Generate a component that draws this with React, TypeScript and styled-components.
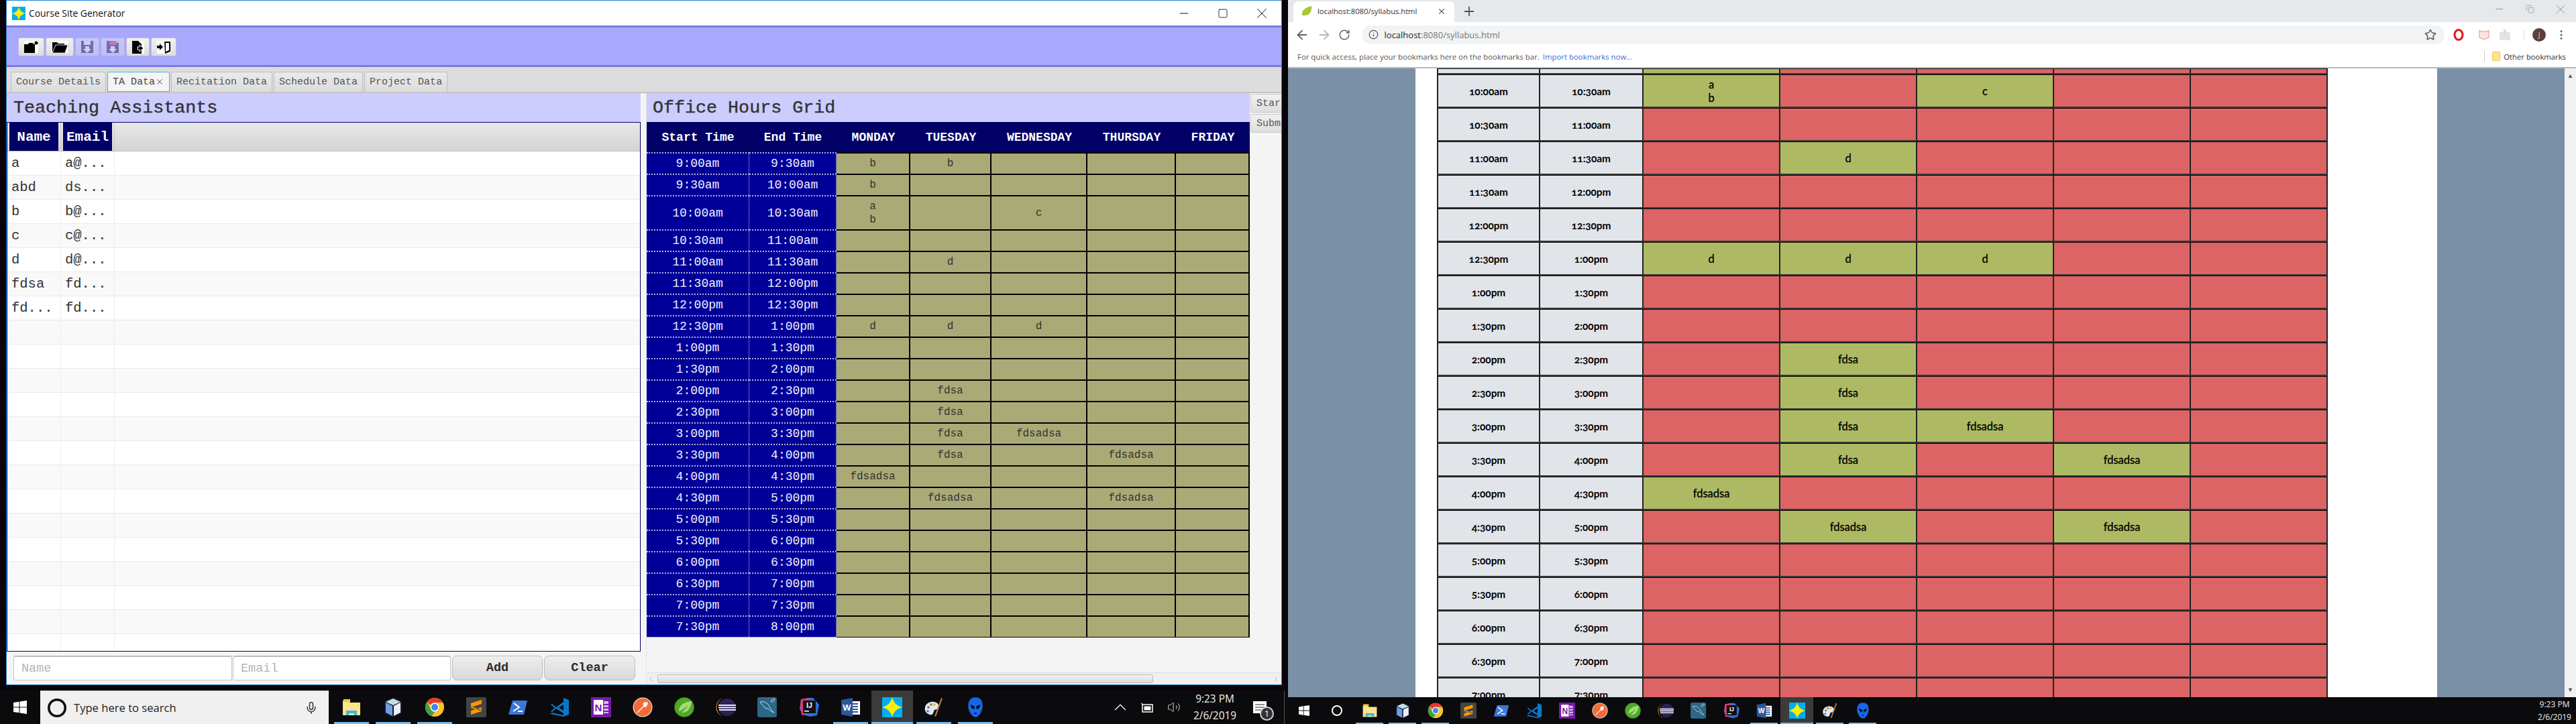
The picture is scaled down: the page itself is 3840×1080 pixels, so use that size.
import React from "react";
import styled, { createGlobalStyle } from "styled-components";
import { ArrowLeft, ArrowRight, RotateCw, Info, Star, X, Plus, Minus, Square, Copy, ChevronUp, ChevronLeft, ChevronRight, Mic, Volume2, MoreVertical } from "lucide-react";

const Global = createGlobalStyle`
  html, body { margin: 0; padding: 0; background: #0a0508; }
  #root { width: 3840px; height: 1080px; overflow: hidden; }
  * { box-sizing: border-box; }
`;

const MONO = `"Liberation Mono", monospace`;
const UI = `"Open Sans", "Noto Sans", sans-serif`;

/* ---------- page ---------- */
const Screens = styled.div`display: flex; width: 3840px; height: 1080px;`;
const Monitor = styled.div`width: 1920px; height: 1080px; display: flex; flex-direction: column; overflow: hidden;`;
const Desktop = styled.div<{ $h: number }>`
  height: ${p => p.$h}px; flex: none; background: #0a0408; overflow: hidden;
`;
const LeftDesk = styled(Desktop)`padding: 0 9px;`;

/* ---------- app window ---------- */
const AppWindow = styled.div`
  width: 1902px; height: 1022px; background: #f4f4f4; border: 1px solid #1b83d4;
  display: flex; flex-direction: column;
`;
const TitleBar = styled.div`
  height: 37px; flex: none; background: #fff; display: flex; align-items: center; padding: 0 0 0 8px;
  font: 13.9px ${UI}; color: #111;
`;
const TitleText = styled.span`margin-left: 5px; flex: 1;`;
const WinCtl = styled.span`width: 58px; display: flex; justify-content: center; align-items: center; color: #111;`;
const Toolbar = styled.div`
  height: 62px; flex: none; background: #a8a8ff; border-top: 3px solid #7b7bdf; border-bottom: 3px solid #7b7bdf;
  padding: 15px 0 0 17px; display: flex; gap: 2px;
`;
const ToolBtn = styled.div<{ $w: number; $off?: boolean }>`
  width: ${p => p.$w}px; height: 28px; border: 1px solid #bdbdd0; border-radius: 3px;
  background: linear-gradient(#f2f2f2, #dcdcdc); display: flex; align-items: center; justify-content: center;
  ${p => p.$off && "opacity: .42;"}
`;
const TabBar = styled.div`
  height: 39px; flex: none; background: #dcdcdc; border-bottom: 2px solid #c4c4c4;
  padding: 7px 0 0 6px; display: flex; gap: 2px; align-items: stretch;
`;
const Tab = styled.div<{ $on?: boolean }>`
  padding: 0 7px; display: flex; align-items: center; font: 15px ${MONO}; white-space: pre;
  color: ${p => (p.$on ? "#444" : "#555")};
  border: 1px solid ${p => (p.$on ? "#47b4dc" : "#bdbdbd")}; border-bottom-width: ${p => (p.$on ? "1px" : "0")};
  border-radius: 3px 3px 0 0;
  background: ${p => (p.$on ? "#f4f4f4" : "linear-gradient(#eaeaea, #dcdcdc)")};
`;
const Workspace = styled.div`flex: 1; display: flex; min-height: 0;`;
const LeftPane = styled.div`width: 947px; flex: none; display: flex; flex-direction: column; padding-right: 2px;`;
const Splitter = styled.div`width: 7px; flex: none; background: #f4f4f4; border-right: 1px solid #e4e4e4;`;
const RightPane = styled.div`flex: 1; display: flex; flex-direction: column; min-width: 0; background: #f4f4f4;`;
const Heading = styled.div`
  height: 43px; flex: none; background: #ccccff; display: flex; align-items: center; padding-left: 10px;
  font: normal 26.7px ${MONO}; -webkit-text-stroke: .4px #333; color: #333; white-space: pre;
`;

/* ---------- TA table ---------- */
const TaTable = styled.div`
  flex: 1; min-height: 0; border: 1px solid #000066; overflow: hidden; background: #fff;
  display: flex; flex-direction: column;
`;
const TaHeadRow = styled.div`
  height: 43px; flex: none; display: flex; background: linear-gradient(#e8e8e8, #d4d4d4); border-bottom: 1px solid #c0c0c0;
`;
const TaHeadSlot = styled.div<{ $w: number }>`
  width: ${p => p.$w}px; padding: 0 3px; border-right: 1px solid #c8c8c8; display: flex;
`;
const TaHead = styled.div`
  flex: 1; background: #000066; color: #fff; font: bold 21px ${MONO}; display: flex; align-items: center; justify-content: center;
`;
const TaRow = styled.div<{ $alt: boolean }>`
  height: 36px; flex: none; display: flex; background: ${p => (p.$alt ? "#f9f9f9" : "#fff")}; border-bottom: 1px solid #eaeaea;
`;
const TaCell = styled.div<{ $w: number }>`
  width: ${p => p.$w}px; padding-left: 6px; display: flex; align-items: center; border-right: 1px solid #eeeeee;
  font: 20.5px ${MONO}; color: #333; white-space: pre;
`;
const FormBar = styled.div`height: 49px; flex: none; padding: 6px 0 0 10px; display: flex; gap: 1px;`;
const Field = styled.input<{ $w: number }>`
  width: ${p => p.$w}px; height: 37px; border: 1px solid #c6c6c6; border-top: 2px solid #bcbcbc; border-radius: 3px; background: #fff;
  padding: 0 11px; font: 18.5px ${MONO}; outline: none;
  &::placeholder { color: #b4b4b4; opacity: 1; }
`;
const FormBtn = styled.div<{ $w: number }>`
  width: ${p => p.$w}px; height: 37px; border: 1px solid #bdbdbd; border-radius: 7px; margin-left: 1px;
  background: linear-gradient(#eeeeee, #d8d8d8); display: flex; align-items: center; justify-content: center;
  font: bold 18.5px ${MONO}; color: #2a2a2a;
`;

/* ---------- office hours grid ---------- */
const GridScroller = styled.div`flex: 1; min-height: 0; display: flex; overflow: hidden;`;
const GridSection = styled.div`width: 899px; flex: none; display: flex; flex-direction: column;`;
const GridHeading = styled(Heading)`padding-left: 9px;`;
const SideCol = styled.div`width: 47px; flex: none; padding: 1px 0 0 1px; display: flex; flex-direction: column; gap: 2px;`;
const SideBtn = styled.div`
  height: 28px; border: 1px solid #c8c8c8; border-right: none; border-radius: 3px 0 0 3px; background: linear-gradient(#f0f0f0, #dedede);
  padding-left: 8px; display: flex; align-items: center; font: 15px ${MONO}; color: #555; overflow: hidden;
`;
const GridRow = styled.div<{ $h: number }>`display: flex; height: ${p => p.$h}px; flex: none;`;
const GridHead = styled.div<{ $w: number }>`
  width: ${p => p.$w}px; background: #000066; color: #fff; font: bold 18px ${MONO}; white-space: pre;
  display: flex; align-items: center; justify-content: center;
`;
const TimeCell = styled.div<{ $w: number }>`
  width: ${p => p.$w}px; background: #000099; color: #f0f0ff; font: 18px ${MONO};
  border-top: 2px dotted #b4b4dc; border-right: 1px dotted #c8c8e8;
  display: flex; align-items: center; justify-content: center;
`;
const HourCell = styled.div<{ $w: number }>`
  width: ${p => p.$w}px; background: #aaaa77; color: #333; font: 16px/20px ${MONO}; white-space: pre-line; text-align: center;
  border-top: 2px solid #000; border-right: 2px solid #000;
  display: flex; align-items: center; justify-content: center;
`;
const GridEnd = styled.div`height: 1px; width: 899px; flex: none; display: flex;`;
const EndTime = styled.div`width: 283px; background: #b4b4dc;`;
const EndHour = styled.div`flex: 1; background: #000;`;
const HScroll = styled.div`
  height: 18px; flex: none; background: #f0f0f0; border-top: 1px solid #dedede; display: flex; align-items: center; color: #777; padding-right: 2px;
`;
const ScrollArrow = styled.span`width: 12px; height: 16px; display: flex; align-items: center; justify-content: center; overflow: visible;`;
const HThumb = styled.div`
  width: 739px; height: 13px; margin-left: 4px; margin-right: auto; border: 1px solid #bbb; border-radius: 3px; background: linear-gradient(#f0f0f0, #dcdcdc);
`;

/* ---------- taskbar ---------- */
const TaskBar = styled.div<{ $h: number }>`
  height: ${p => p.$h}px; flex: none; background: #0b0a0c; display: flex; align-items: stretch; color: #fff; font-family: ${UI};
`;
const Start = styled.div<{ $w: number }>`width: ${p => p.$w}px; flex: none; display: flex; align-items: center; justify-content: center;`;
const SearchBox = styled.div`
  width: 430px; flex: none; background: #f0f0f0; border-top: 1px solid #c8c8c8; display: flex; align-items: center; padding: 0 16px 0 11px; color: #222;
  font: 16.6px ${UI};
`;
const SearchText = styled.span`margin-left: 11px; flex: 1;`;
const Apps = styled.div<{ $ml: number }>`display: flex; margin-left: ${p => p.$ml}px;`;
const Slot = styled.div<{ $w: number; $state?: "run" | "active"; $bar: number; $pad: number }>`
  width: ${p => p.$w}px; display: flex; align-items: center; justify-content: center; position: relative;
  background: ${p => (p.$state === "active" ? "#3b3b3b" : "transparent")};
  &::after {
    content: ""; display: ${p => (p.$state ? "block" : "none")}; position: absolute; bottom: 0; height: ${p => p.$bar}px; background: #76b9ed;
    left: ${p => (p.$state === "active" ? 0 : p.$pad)}px; right: ${p => (p.$state === "active" ? 0 : p.$pad)}px;
  }
`;
const Tray = styled.div`margin-left: auto; display: flex; align-items: stretch;`;
const TrayItem = styled.div<{ $w: number }>`width: ${p => p.$w}px; display: flex; align-items: center; justify-content: center; position: relative;`;
const Clock = styled.div<{ $w: number; $size: number; $gap: number }>`
  width: ${p => p.$w}px; display: flex; flex-direction: column; align-items: center; justify-content: center; gap: ${p => p.$gap}px;
  font: ${p => p.$size}px/1 ${UI}; color: #eee;
`;
const Badge = styled.span`
  position: absolute; left: 26px; top: 24px; width: 21px; height: 21px; border-radius: 50%; background: #333; border: 2px solid #ccc;
  font: 13px/17px ${UI}; color: #fff; text-align: center;
`;
const EdgeLine = styled.div`width: 1px; background: #555; margin-right: 5px; margin-left: 10px;`;

/* ---------- browser ---------- */
const Browser = styled.div`height: 1040px; display: flex; flex-direction: column; background: #fff;`;
const TabStrip = styled.div`height: 33px; flex: none; background: #e6e9ec; display: flex; align-items: flex-end; padding-left: 8px;`;
const ChromeTab = styled.div`
  width: 240px; height: 31px; background: #fff; border-radius: 8px 8px 0 0; display: flex; align-items: center; padding: 0 12px 2px 12px;
  font: 11.2px ${UI}; color: #333;
`;
const TabTitle = styled.span`margin-left: 8px; flex: 1;`;
const NewTab = styled.div`margin-left: 11px; height: 33px; display: flex; align-items: center; color: #555;`;
const WinBtns = styled.div`margin-left: auto; height: 33px; display: flex; align-items: center; color: #888; padding-bottom: 6px;`;
const ChromeWin = styled.span`width: 46px; display: flex; justify-content: center;`;
const NavBar = styled.div`height: 37px; flex: none; display: flex; align-items: center; padding: 0 0 0 10px; color: #5f6368;`;
const NavIcon = styled.span<{ $w: number; $dim?: boolean }>`
  width: ${p => p.$w}px; display: flex; align-items: center; color: ${p => (p.$dim ? "#b5b8bb" : "#5f6368")};
`;
const Omnibox = styled.div`
  width: 1622px; height: 28px; margin-left: 2px; border-radius: 14px; background: #f1f3f4; display: flex; align-items: center; padding: 0 12px 0 10px;
  font: 13px ${UI}; color: #555;
`;
const Url = styled.span`margin-left: 9px; flex: 1; color: #777;`;
const UrlHost = styled.span`color: #222;`;
const ExtSlot = styled.span<{ $w: number }>`width: ${p => p.$w}px; display: flex; justify-content: center; align-items: center;`;
const NavSep = styled.span`width: 1px; height: 16px; background: #d8d8d8;`;
const Avatar = styled.span`
  width: 20px; height: 20px; border-radius: 50%; background: #5d4037; color: #ddd; font: 10px/20px ${UI}; text-align: center;
`;
const BookmarkBar = styled.div`
  height: 32px; flex: none; background: #fff; border-bottom: 2px solid #b8b8b8; display: flex; align-items: center; padding: 0 15px 2px 14px;
  font: 11.4px ${UI}; color: #555; white-space: pre;
`;
const LinkText = styled.span`color: #3b6fd6; margin-left: 5px;`;
const OtherBm = styled.div`margin-left: auto; display: flex; align-items: center; color: #333; font-size: 11.3px;`;
const BmSep = styled.span`width: 1px; height: 16px; background: #ccc; margin-right: 11px;`;
const BmFolder = styled.svg`margin-right: 5px;`;
const Page = styled.div`flex: 1; min-height: 0; display: flex; overflow: hidden;`;
const Side = styled.div<{ $w: number }>`width: ${p => p.$w}px; flex: none; background: #7a90a6;`;
const PageBody = styled.div`width: 1523px; flex: none; background: #fff; padding-left: 32px; overflow: hidden;`;
const VScroll = styled.div`
  width: 17px; flex: none; background: #f1f1f1; display: flex; flex-direction: column; justify-content: space-between; align-items: center; padding: 6px 0;
  color: #505050; font: 9px/10px ${UI};
`;
const SchedRow = styled.div<{ $h: number }>`display: flex; height: ${p => p.$h}px; width: 1329px;`;
const SchedCell = styled.div<{ $w: number; $kind: "time" | "free" | "busy" }>`
  width: ${p => p.$w}px; flex: none; display: flex; align-items: center; justify-content: center; white-space: pre-line; text-align: center;
  border-bottom: 2px solid #3a3a3a; border-top: 1px solid #000; border-right: 2px solid #222;
  font: ${p => (p.$kind === "time" ? "bold 15.4px" : "normal 16.5px")}/20px Lato, sans-serif; color: #000;
  font-variant-numeric: oldstyle-nums;
  ${p => p.$kind !== "time" && "-webkit-text-stroke: .3px #000;"}
  background: ${p => (p.$kind === "time" ? "#e1e4e9" : p.$kind === "busy" ? "#aeba63" : "#dc6464")};
  &:first-child { border-left: 2px solid #222; }
`;

/* ---------- drawings ---------- */
const StarLogo = ({ s = 20 }: { s?: number }) => (
  <svg width={s} height={s} viewBox="0 0 20 20"><rect width="20" height="20" fill="#00aeef" /><path d="M10 0 Q11.5 8 20 10 Q11.5 12 10 20 Q8.5 12 0 10 Q8.5 8 10 0Z" fill="#ffee00" /></svg>
);
const TbNew = () => (<svg width="21" height="18" viewBox="0 0 21 18"><rect width="21" height="18" fill="#fff" /><path d="M0 5h6l1 -2h6l1 2h2v13H0z" fill="#000" /><circle cx="18" cy="3" r="2.6" fill="#000" /></svg>);
const TbOpen = () => (<svg width="24" height="18" viewBox="0 0 24 18"><rect width="24" height="18" fill="#fff" /><path d="M1 18V2h7l2 2h9v3H6z" fill="#000" /><path d="M6 6h18l-4 12H1z" fill="#000" stroke="#fff" strokeWidth=".8" /></svg>);
const TbSave = ({ pink }: { pink?: boolean }) => (<svg width="18" height="18" viewBox="0 0 18 18"><path d="M0 0h18v18H0z" fill="#223" /><rect x="4" y="0" width="10" height="6" fill={pink ? "#e0306a" : "#fff"} />{pink && <rect x="14" y="0" width="4" height="3" fill="#ffd040" />}<path d="M6 8h6v4h3l-6 6-6-6h3z" fill="#fff" /></svg>);
const TbExport = () => (<svg width="18" height="19" viewBox="0 0 18 19"><rect width="18" height="19" fill="#fff" /><path d="M0 0h9l5 5v14H0z" fill="#000" /><path d="M8 9h3V6l6 5-6 5v-3H8z" fill="#000" stroke="#fff" strokeWidth="1" /></svg>);
const TbExit = () => (<svg width="20" height="19" viewBox="0 0 20 19"><rect width="20" height="19" fill="#fff" /><path d="M11 1h9v15l-8 3z" fill="#000" /><path d="M13 3h5v11l-5 2z" fill="#fff" /><path d="M0 7h4V4l5 5-5 5v-3H0z" fill="#000" /></svg>);

const WinLogo = ({ s }: { s: number }) => (<svg width={s} height={s} viewBox="0 0 20 20"><path d="M0 3l8.5-1.3v7.8H0zM9.5 1.500L20 0v9.500H9.500zM0 10.500h8.500v7.800L0 17zM9.500 10.500H20V20L9.500 18.500z" fill="#fff" /></svg>);
const Cortana = ({ s, w, light }: { s: number; w: number; light?: boolean }) => (<svg width={s} height={s} viewBox="0 0 24 24"><circle cx="12" cy="12" r="10.500" fill="none" stroke={light ? "#fff" : "#111"} strokeWidth={w} /></svg>);
const icons: Record<string, (s: number) => React.ReactNode> = {
  folder: s => (<svg width={s} height={s} viewBox="0 0 30 30"><path d="M2 5h9l2 3h15v19H2z" fill="#fde38a" /><rect x="3" y="3" width="10" height="4" fill="#f6c445" /><path d="M7 27V20h16v7h-4v-3h-8v3z" fill="#3fb3e8" /></svg>),
  cube: s => (<svg width={s} height={s} viewBox="0 0 30 30"><path d="M15 0l13 6v18l-13 6-13-6V6z" fill="#15153f" /><path d="M15 2l11 5-11 5L4 7z" fill="#bfe2d8" /><path d="M4 8l10 5v15L4 23z" fill="#6f9fe0" /><path d="M26 8l-10 5v15l10-5z" fill="#e8f0f2" /></svg>),
  chrome: s => (<svg width={s} height={s} viewBox="0 0 30 30"><circle cx="15" cy="15" r="14" fill="#fbc02d" /><path d="M15 1A14 14 0 0 1 27.100 8H15a7 7 0 0 0-6.100 3.500L3.500 7A14 14 0 0 1 15 1z" fill="#e53935" /><path d="M3.500 7l6.100 11.500A7 7 0 0 0 15 22l-4.500 6.300A14 14 0 0 1 3.500 7z" fill="#43a047" /><circle cx="15" cy="15" r="6.500" fill="#fff" /><circle cx="15" cy="15" r="5" fill="#4285f4" /></svg>),
  sublime: s => (<svg width={s} height={s} viewBox="0 0 30 30"><rect width="30" height="30" rx="2" fill="#444" /><path d="M7 9l16-5v6L7 15zM7 16l16 4v-1L7 14zM7 20l16-5v6L7 26z" fill="#ff9800" /></svg>),
  ps: s => (<svg width={s} height={s} viewBox="0 0 30 30"><path d="M7 5h22l-5 21H1z" fill="#3b78d8" /><path d="M9 9l8 6-9 6M15 21h7" fill="none" stroke="#fff" strokeWidth="2" /></svg>),
  vs: s => (<svg width={s} height={s} viewBox="0 0 30 30"><path d="M21 1l8 3v22l-8 3L1 25l3-2 17 4V3z" fill="#0a78c8" /><path d="M21 7L10 15 4 10 2 11l6 5-6 5 2 1 6-5 11 7z M21 11v9l-7-4.500z" fill="#0a78c8" fillRule="evenodd" /></svg>),
  onenote: s => (<svg width={s} height={s} viewBox="0 0 30 30"><rect width="30" height="30" fill="#7719aa" /><rect x="4" y="4" width="14" height="22" fill="#fff" /><path d="M19 6h7v4h-7zM19 12h7v3h-7zM19 17h7v3h-7zM19 22h7v2h-7z" fill="#d7b8ea" /><text x="11" y="21" textAnchor="middle" fontFamily="Liberation Sans" fontWeight="bold" fontSize="15" fill="#7719aa">N</text></svg>),
  postman: s => (<svg width={s} height={s} viewBox="0 0 30 30"><circle cx="15" cy="15" r="14.500" fill="#f7f0ea" /><circle cx="15" cy="15" r="13.500" fill="#f26b3a" /><path d="M7 23L17 13" stroke="#fff" strokeWidth="1.500" /><path d="M16 8l5-1 2 2-3 6-4-1z" fill="#fff" /></svg>),
  spring: s => (<svg width={s} height={s} viewBox="0 0 30 30"><circle cx="15" cy="15" r="14.500" fill="#4fa82a" strokeDasharray="3 2" stroke="#2f7d18" strokeWidth="1" /><path d="M7 21C7 11 16 7 26 6 25 17 19 24 11 23 16 19 18 16 21 12 16 16 12 19 7 21z" fill="#a5db78" /></svg>),
  eclipse: s => (<svg width={s} height={s} viewBox="0 0 30 30"><path d="M11 1A14.500 14.500 0 0 0 11 29 15 15 0 0 1 11 1z" fill="#f7941e" /><circle cx="17" cy="15" r="13" fill="#2c2255" /><path d="M4 11h26v2H4zM4 14.500h26v2H4zM5 18h25v2H5z" fill="#e8e8f4" /></svg>),
  mysql: s => (<svg width={s} height={s} viewBox="0 0 30 30"><rect width="29" height="30" rx="3" fill="#2b6787" /><path d="M4 7c6-1 11 1 14 7 2 4 4 7 7 9-4-1-7-4-9-6-3 0-6-1-7-4-2-2-4-4-5-6zM20 5l5-3 1 2-4 4z" fill="none" stroke="#c9dde6" strokeWidth="1" /></svg>),
  ij: s => (<svg width={s} height={s} viewBox="0 0 30 30"><path d="M3 3l12-2 6 0 9 10-3 16-10 2-12-3-4-9z" fill="#2f6fdf" /><path d="M2 14L3 3l12-2-4 24-7 2z" fill="#e9366e" /><rect x="6" y="5" width="19" height="19" fill="#111" /><text x="15.500" y="16" textAnchor="middle" fontFamily="Liberation Sans" fontWeight="bold" fontSize="10.500" fill="#fff">IJ</text><rect x="8" y="20" width="7" height="1.500" fill="#fff" /></svg>),
  word: s => (<svg width={s} height={s} viewBox="0 0 30 30"><rect x="11" y="6" width="18" height="20" fill="#fff" /><path d="M14 9h12v2H14zM14 13h12v2H14zM14 17h12v2H14zM14 21h12v2H14z" fill="#2b579a" /><path d="M1 4l17-3v28L1 26z" fill="#2b579a" /><text x="9.500" y="20" textAnchor="middle" fontFamily="Liberation Sans" fontWeight="bold" fontSize="13" fill="#fff">W</text></svg>),
  star: s => <StarLogo s={s} />,
  palette: s => (<svg width={s} height={s} viewBox="0 0 30 30"><path d="M2 20C0 11 8 6 15 7c7 1 9 6 6 10-3 3-5 0-6 4s-2 6-6 5-6-3-7-6z" fill="#dbe9f0" /><circle cx="7" cy="15" r="1.800" fill="#e53935" /><circle cx="11" cy="11" r="1.800" fill="#43a047" /><circle cx="16" cy="11" r="1.800" fill="#f9a825" /><circle cx="6" cy="21" r="1.800" fill="#1e88e5" /><path d="M26 1l2 1-10 27-2-1z" fill="#b57b3a" /></svg>),
  alien: s => (<svg width={s} height={s} viewBox="0 0 30 30"><path d="M15 0c7 0 11 5 11 13 0 8-6 17-11 17S4 21 4 13C4 5 8 0 15 0z" fill="#1668e8" stroke="#223" strokeWidth="1" /><path d="M8 11l6 3-1 4-4-2zM22 11l-6 3 1 4 4-2z" fill="#000" /><path d="M13 24h4" stroke="#012" strokeWidth="1.500" /></svg>),
};
const appOrder: [string, "run" | "active" | undefined][] = [
  ["folder", "run"], ["cube", "run"], ["chrome", "run"], ["sublime", undefined], ["ps", undefined], ["vs", undefined],
  ["onenote", undefined], ["postman", undefined], ["spring", undefined], ["eclipse", undefined], ["mysql", undefined], ["ij", undefined],
  ["word", "run"], ["star", "active"], ["palette", "run"], ["alien", "run"],
];
const AppStrip = ({ w, s, bar, pad, ml }: { w: number; s: number; bar: number; pad: number; ml: number }) => (
  <Apps $ml={ml}>
    {appOrder.map(([k, st]) => (
      <Slot key={k} $w={w} $state={st} $bar={bar} $pad={pad}>{icons[k](s)}</Slot>
    ))}
  </Apps>
);

/* ---------- data ---------- */
const hours = ["9:00am","9:30am","10:00am","10:30am","11:00am","11:30am","12:00pm","12:30pm","1:00pm","1:30pm","2:00pm","2:30pm","3:00pm","3:30pm","4:00pm","4:30pm","5:00pm","5:30pm","6:00pm","6:30pm","7:00pm","7:30pm","8:00pm"];
const slots: Record<string, string[]> = {
  "9:00am": ["b","b","","",""], "9:30am": ["b","","","",""], "10:00am": ["a\nb","","c","",""],
  "11:00am": ["","d","","",""], "12:30pm": ["d","d","d","",""], "2:00pm": ["","fdsa","","",""], "2:30pm": ["","fdsa","","",""],
  "3:00pm": ["","fdsa","fdsadsa","",""], "3:30pm": ["","fdsa","","fdsadsa",""], "4:00pm": ["fdsadsa","","","",""], "4:30pm": ["","fdsadsa","","fdsadsa",""],
};
const EMPTY = ["","","","",""];
const gridCols = [153,130,110,121,143,132,110];
const gridHeads = ["Start Time","End Time","MONDAY","TUESDAY","WEDNESDAY","THURSDAY","FRIDAY"];
const tas = [["a","a@..."],["abd","ds..."],["b","b@..."],["c","c@..."],["d","d@..."],["fdsa","fd..."],["fd...","fd..."]];
const taRows = Array.from({ length: 21 }, (_, i) => tas[i] || ["",""]);
const schedCols = [154,154,204,204,204,204,204];
const schedHours = hours.slice(2, 21);

const App = () => (
  <>
    <Global />
    <Screens>
      <Monitor>
        <LeftDesk $h={1030}>
          <AppWindow>
            <TitleBar>
              <StarLogo />
              <TitleText>Course Site Generator</TitleText>
              <WinCtl><Minus size={20} strokeWidth={1.2} /></WinCtl>
              <WinCtl><Square size={16} strokeWidth={1.3} /></WinCtl>
              <WinCtl><X size={26} strokeWidth={.9} /></WinCtl>
            </TitleBar>
            <Toolbar>
              <ToolBtn $w={39}><TbNew /></ToolBtn>
              <ToolBtn $w={42}><TbOpen /></ToolBtn>
              <ToolBtn $w={36} $off><TbSave /></ToolBtn>
              <ToolBtn $w={36} $off><TbSave pink /></ToolBtn>
              <ToolBtn $w={35}><TbExport /></ToolBtn>
              <ToolBtn $w={38}><TbExit /></ToolBtn>
            </Toolbar>
            <TabBar>
              <Tab>Course Details</Tab>
              <Tab $on>TA Data<X size={14} strokeWidth={1.5} /></Tab>
              <Tab>Recitation Data</Tab>
              <Tab>Schedule Data</Tab>
              <Tab>Project Data</Tab>
            </TabBar>
            <Workspace>
              <LeftPane>
                <Heading>Teaching Assistants</Heading>
                <TaTable>
                  <TaHeadRow>
                    <TaHeadSlot $w={80}><TaHead>Name</TaHead></TaHeadSlot>
                    <TaHeadSlot $w={80}><TaHead>Email</TaHead></TaHeadSlot>
                  </TaHeadRow>
                  {taRows.map((r, i) => (
                    <TaRow key={i} $alt={i % 2 === 1}>
                      <TaCell $w={80}>{r[0]}</TaCell>
                      <TaCell $w={80}>{r[1]}</TaCell>
                    </TaRow>
                  ))}
                </TaTable>
                <FormBar>
                  <Field $w={326} placeholder="Name" readOnly />
                  <Field $w={325} placeholder="Email" readOnly />
                  <FormBtn $w={135}>Add</FormBtn>
                  <FormBtn $w={136}>Clear</FormBtn>
                </FormBar>
              </LeftPane>
              <Splitter />
              <RightPane>
                <GridScroller>
                  <GridSection>
                    <GridHeading>Office Hours Grid</GridHeading>
                    <GridRow $h={45}>
                      {gridHeads.map((h, i) => <GridHead key={h} $w={gridCols[i]}>{h}</GridHead>)}
                    </GridRow>
                    {hours.slice(0, 22).map((h, i) => {
                      const vals = slots[h] || EMPTY;
                      return (
                        <GridRow key={h} $h={h === "10:00am" ? 51 : 32}>
                          <TimeCell $w={gridCols[0]}>{h}</TimeCell>
                          <TimeCell $w={gridCols[1]}>{hours[i + 1]}</TimeCell>
                          {vals.map((v, j) => <HourCell key={j} $w={gridCols[j + 2]}>{v}</HourCell>)}
                        </GridRow>
                      );
                    })}
                    <GridEnd><EndTime /><EndHour /></GridEnd>
                  </GridSection>
                  <SideCol>
                    <SideBtn>Star</SideBtn>
                    <SideBtn>Subm</SideBtn>
                  </SideCol>
                </GridScroller>
                <HScroll>
                  <ScrollArrow><ChevronLeft size={20} strokeWidth={1.1} /></ScrollArrow>
                  <HThumb />
                  <ScrollArrow><ChevronRight size={20} strokeWidth={1.1} /></ScrollArrow>
                </HScroll>
              </RightPane>
            </Workspace>
          </AppWindow>
        </LeftDesk>
        <TaskBar $h={50}>
          <Start $w={60}><WinLogo s={20} /></Start>
          <SearchBox>
            <Cortana s={28} w={3} />
            <SearchText>Type here to search</SearchText>
            <Mic size={20} strokeWidth={1.6} />
          </SearchBox>
          <AppStrip w={62} s={30} bar={3} pad={5} ml={3} />
          <Tray>
            <TrayItem $w={40}><ChevronUp size={30} strokeWidth={1} /></TrayItem>
            <TrayItem $w={40}>
              <svg width="18" height="15" viewBox="0 0 18 15"><rect x="2" y="3" width="15" height="11" fill="none" stroke="#fff" strokeWidth="1.500" /><rect x="4.500" y="5.500" width="10" height="6" fill="#fff" /><path d="M0 0l3 2v3H1V3z" fill="#ddd" /></svg>
            </TrayItem>
            <TrayItem $w={40}><Volume2 size={20} strokeWidth={1} /></TrayItem>
            <Clock $w={82} $size={15.4} $gap={10}><span>9:23 PM</span><span>2/6/2019</span></Clock>
            <TrayItem $w={52}>
              <svg width="20" height="18" viewBox="0 0 20 18"><path d="M0 0h20v18H0z" fill="#fff" /><path d="M3 5h14M3 9h14M3 13h14" stroke="#222" /></svg>
              <Badge>1</Badge>
            </TrayItem>
            <EdgeLine />
          </Tray>
        </TaskBar>
      </Monitor>

      <Monitor>
        <Browser>
          <TabStrip>
            <ChromeTab>
              <svg width="16" height="15" viewBox="0 0 16 15"><path d="M1 14C-1 7 6 2 15 0c1 8-3 14-9 14-2 0-3 0-5 0z" fill="#a8c83a" /></svg>
              <TabTitle>localhost:8080/syllabus.html</TabTitle>
              <X size={14} strokeWidth={1.8} />
            </ChromeTab>
            <NewTab><Plus size={22} strokeWidth={2} /></NewTab>
            <WinBtns>
              <ChromeWin><Minus size={17} strokeWidth={1.2} /></ChromeWin>
              <ChromeWin><Copy size={13} strokeWidth={1.2} /></ChromeWin>
              <ChromeWin><X size={24} strokeWidth={.8} /></ChromeWin>
            </WinBtns>
          </TabStrip>
          <NavBar>
            <NavIcon $w={33}><ArrowLeft size={22} /></NavIcon>
            <NavIcon $w={32} $dim><ArrowRight size={22} /></NavIcon>
            <NavIcon $w={33}><RotateCw size={18} /></NavIcon>
            <Omnibox>
              <Info size={15} />
              <Url><UrlHost>localhost</UrlHost>:8080/syllabus.html</Url>
              <Star size={18} />
            </Omnibox>
            <ExtSlot $w={43}><svg width="16" height="18" viewBox="0 0 16 18"><ellipse cx="8" cy="9" rx="6" ry="7.500" fill="none" stroke="#e5121e" strokeWidth="3" /></svg></ExtSlot>
            <ExtSlot $w={32}><svg width="16" height="16" viewBox="0 0 16 16"><path d="M1 1l3 2h8l3-2v11l-7 3-7-3z" fill="#fbe6e4" stroke="#e88" /></svg></ExtSlot>
            <ExtSlot $w={32}><svg width="16" height="16" viewBox="0 0 16 16"><rect y="4" width="16" height="12" fill="#e4e4e4" /><rect x="6" y="0" width="4" height="8" fill="#ddd" /></svg></ExtSlot>
            <ExtSlot $w={25}><NavSep /></ExtSlot>
            <ExtSlot $w={20}><Avatar>J</Avatar></ExtSlot>
            <ExtSlot $w={45}><MoreVertical size={18} /></ExtSlot>
          </NavBar>
          <BookmarkBar>
            <span>For quick access, place your bookmarks here on the bookmarks bar.</span>
            <LinkText>Import bookmarks now...</LinkText>
            <OtherBm>
              <BmSep />
              <BmFolder width="12" height="14" viewBox="0 0 12 14"><rect x=".5" y=".5" width="11" height="13" rx="1" fill="#fde293" stroke="#f5c542" /></BmFolder>
              Other bookmarks
            </OtherBm>
          </BookmarkBar>
          <Page>
            <Side $w={190} />
            <PageBody>
              <SchedRow $h={9}>
                {schedCols.map((w, i) => <SchedCell key={i} $w={w} $kind={i < 2 ? "time" : i === 2 ? "busy" : "free"} />)}
              </SchedRow>
              {schedHours.map((h, i) => {
                const vals = slots[h] || EMPTY;
                return (
                  <SchedRow key={h} $h={50}>
                    <SchedCell $w={154} $kind="time">{h}</SchedCell>
                    <SchedCell $w={154} $kind="time">{hours[i + 3]}</SchedCell>
                    {vals.map((v, j) => <SchedCell key={j} $w={204} $kind={v ? "busy" : "free"}>{v}</SchedCell>)}
                  </SchedRow>
                );
              })}
            </PageBody>
            <Side $w={190} />
            <VScroll><span>▲</span><span>▼</span></VScroll>
          </Page>
        </Browser>
        <TaskBar $h={40}>
          <Start $w={48}><WinLogo s={16} /></Start>
          <Start $w={49}><Cortana s={16} w={3} light /></Start>
          <AppStrip w={49} s={24} bar={2} pad={4} ml={0} />
          <Tray>
            <Clock $w={64} $size={12} $gap={7}><span>9:23 PM</span><span>2/6/2019</span></Clock>
          </Tray>
        </TaskBar>
      </Monitor>
    </Screens>
  </>
);

export default App;
